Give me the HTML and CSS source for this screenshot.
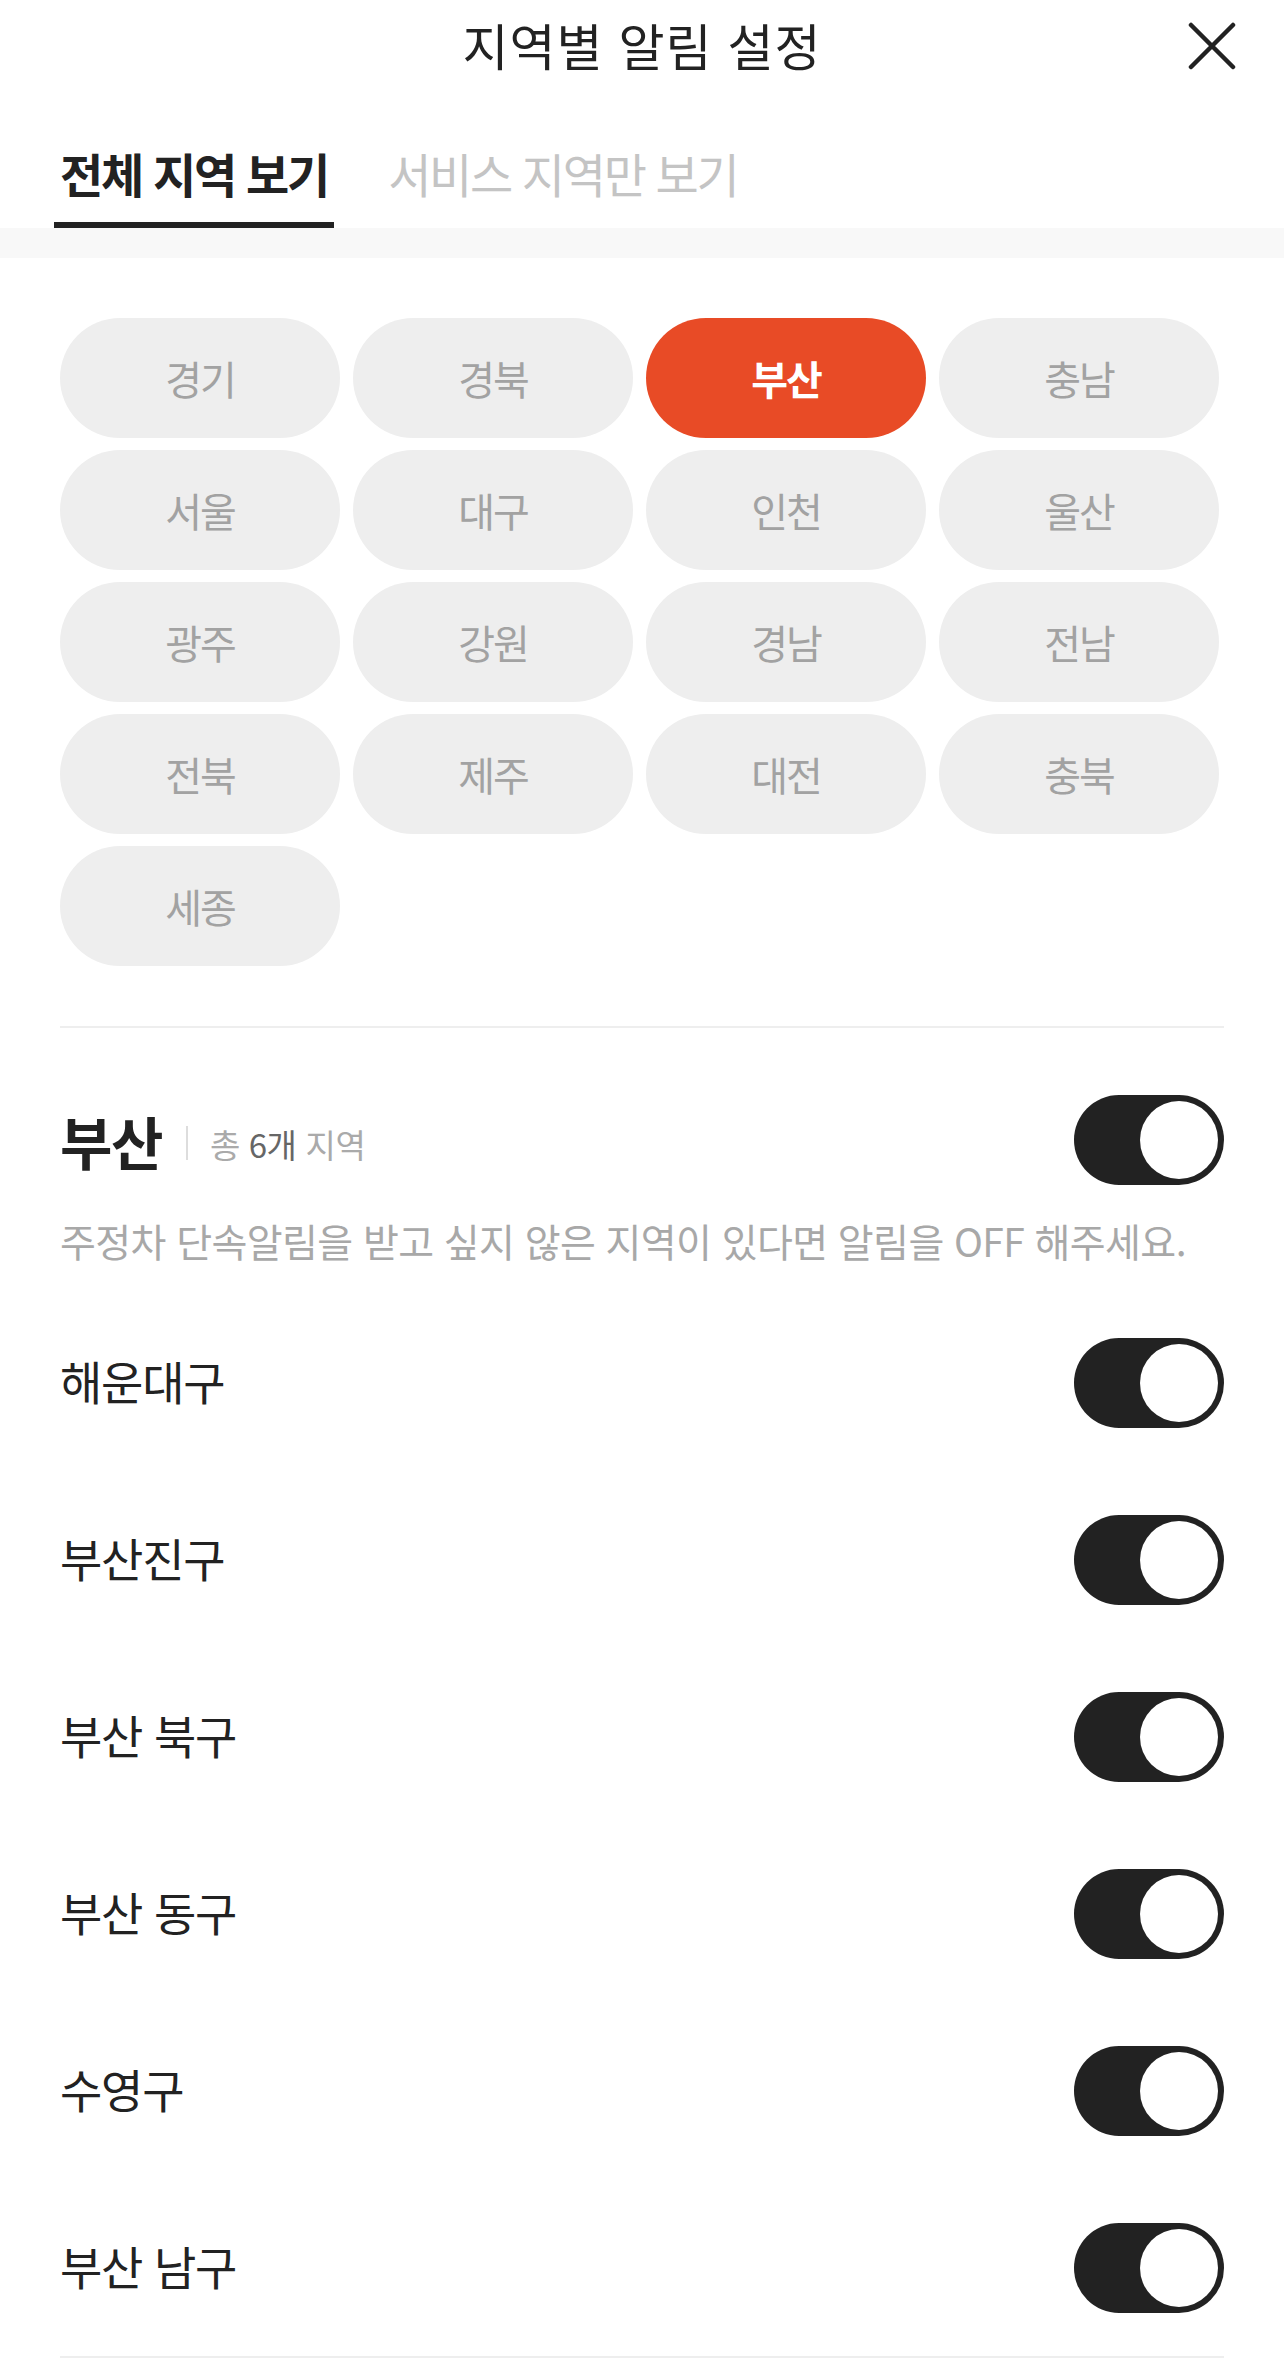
FILE: index.html
```html
<!DOCTYPE html>
<html lang="ko">
<head>
    <meta charset="UTF-8">
    <meta name="viewport" content="width=device-width, initial-scale=1.0">
    <title>지역별 알림 설정</title>
    <link rel="stylesheet" href="styles.css">
</head>
<body>

    <!-- Header -->
    <div class="header">
        <span></span>
        <h1 class="header-title">지역별 알림 설정</h1>
        <button class="close-btn" aria-label="닫기">
            <svg width="48" height="48" viewBox="0 0 48 48">
                <path d="M3 3 L45 45 M45 3 L3 45" stroke="#222" stroke-width="4.5" stroke-linecap="round" fill="none"/>
            </svg>
        </button>
    </div>

    <!-- Tabs -->
    <div class="tabs">
        <div class="tab active">전체 지역 보기</div>
        <div class="tab">서비스 지역만 보기</div>
    </div>
    <div class="band"></div>

    <!-- Region chips -->
    <div class="chips">
        <div class="chip">경기</div>
        <div class="chip">경북</div>
        <div class="chip active">부산</div>
        <div class="chip">충남</div>
        <div class="chip">서울</div>
        <div class="chip">대구</div>
        <div class="chip">인천</div>
        <div class="chip">울산</div>
        <div class="chip">광주</div>
        <div class="chip">강원</div>
        <div class="chip">경남</div>
        <div class="chip">전남</div>
        <div class="chip">전북</div>
        <div class="chip">제주</div>
        <div class="chip">대전</div>
        <div class="chip">충북</div>
        <div class="chip">세종</div>
    </div>

    <div class="divider"></div>

    <!-- Selected region -->
    <div class="region">
        <div class="region-head">
            <div class="region-name">
                <h2>부산</h2>
                <span class="bar"></span>
                <span class="count">총 <b>6개</b> 지역</span>
            </div>
            <span class="toggle"><span class="knob"></span></span>
        </div>
        <p class="region-desc">주정차 단속알림을 받고 싶지 않은 지역이 있다면 알림을 OFF 해주세요.</p>

        <div class="row"><span class="row-label">해운대구</span><span class="toggle"><span class="knob"></span></span></div>
        <div class="row"><span class="row-label">부산진구</span><span class="toggle"><span class="knob"></span></span></div>
        <div class="row"><span class="row-label">부산 북구</span><span class="toggle"><span class="knob"></span></span></div>
        <div class="row"><span class="row-label">부산 동구</span><span class="toggle"><span class="knob"></span></span></div>
        <div class="row"><span class="row-label">수영구</span><span class="toggle"><span class="knob"></span></span></div>
        <div class="row"><span class="row-label">부산 남구</span><span class="toggle"><span class="knob"></span></span></div>
    </div>

    <div class="divider bottom"></div>

</body>
</html>
```

FILE: styles.css
```css
body {
    margin: 0;
    padding: 0;
    background-color: #fff;
    color: #222;
    font-family: "Noto Sans CJK KR", "Noto Sans", sans-serif;
}

/* Header */
.header {
    height: 96px;
    display: grid;
    grid-template-columns: 1fr auto 1fr;
    align-items: center;
}

.header-title {
    margin: 0 0 9px;
    font-size: 50px;
    font-weight: 400;
    letter-spacing: 1px;
    line-height: 60px;
}

.close-btn {
    justify-self: end;
    margin-right: 46px;
    margin-top: -4px;
    width: 52px;
    height: 52px;
    padding: 2px;
    border: none;
    background: none;
}

/* Tabs */
.tabs {
    display: flex;
    gap: 48px;
    padding: 0 54px;
}

.tab {
    padding: 47px 6px 19px;
    font-size: 47px;
    line-height: 60px;
    letter-spacing: -2.3px;
    color: #c4c4c4;
    border-bottom: 6px solid transparent;
}

.tab.active {
    font-weight: 700;
    color: #222;
    letter-spacing: -2.2px;
    border-bottom-color: #222;
}

.band {
    height: 30px;
    background-color: #f8f8f8;
}

/* Chips */
.chips {
    display: grid;
    grid-template-columns: repeat(4, 280px);
    grid-auto-rows: 120px;
    gap: 12px 13px;
    padding: 60px 60px;
}

.chip {
    display: flex;
    align-items: center;
    justify-content: center;
    background-color: #eee;
    border-radius: 60px;
    font-size: 40px;
    letter-spacing: -2px;
    color: #a2a2a2;
}

.chip.active {
    background-color: #e84b26;
    color: #fff;
    font-weight: 700;
}

.divider {
    height: 2px;
    margin: 0 60px;
    background-color: #eee;
}

/* Region section */
.region {
    padding: 67px 60px 0;
}

.region-head {
    display: flex;
    justify-content: space-between;
    align-items: center;
}

.region-name {
    display: flex;
    align-items: center;
}

.region-name h2 {
    margin: 0;
    font-size: 57px;
    font-weight: 700;
    letter-spacing: -1.5px;
    line-height: 70px;
}

.bar {
    width: 2px;
    height: 34px;
    margin: 6px 22px 0 24px;
    background-color: #ddd;
}

.count {
    margin-top: 8px;
    font-size: 33px;
    letter-spacing: -0.4px;
    color: #aaa;
}

.count b {
    font-weight: 400;
    color: #666;
}

.region-desc {
    margin: 27px 0 26px;
    font-size: 39px;
    line-height: 56px;
    letter-spacing: -0.6px;
    color: #a8a8a8;
}

.row {
    height: 177px;
    display: flex;
    justify-content: space-between;
    align-items: center;
    font-size: 46px;
    letter-spacing: -1.2px;
}

.row-label {
    margin-bottom: 6px;
}

/* Toggle switch */
.toggle {
    width: 150px;
    height: 90px;
    box-sizing: border-box;
    padding: 6px;
    border-radius: 45px;
    background-color: #222;
    display: flex;
    justify-content: flex-end;
    align-items: center;
}

.knob {
    width: 78px;
    height: 78px;
    border-radius: 50%;
    background-color: #fff;
}
```
